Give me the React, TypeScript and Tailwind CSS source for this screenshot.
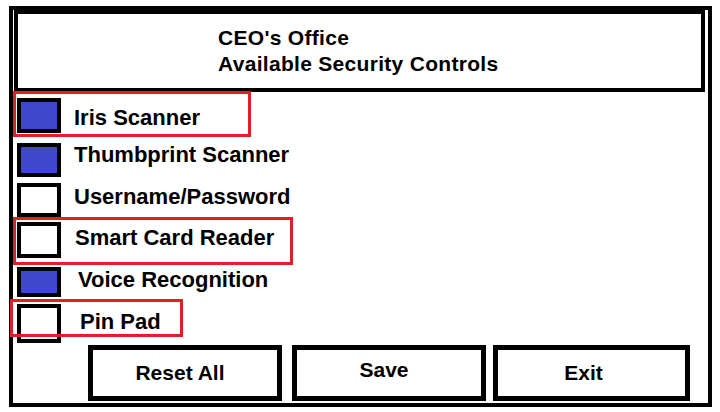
import React from 'react'

type Control = {
  label: string
  checked: boolean
  rowClass: string
  boxClass: string
  labelClass: string
  marked?: string
}

const controls: Control[] = [
  {
    label: 'Iris Scanner',
    checked: true,
    rowClass: 'mt-[6px] h-[35px]',
    boxClass: 'h-[35px]',
    labelClass: 'ml-[13px] mt-[9px]',
    marked: '-top-[7px] left-0 w-[238px] h-[46px]',
  },
  {
    label: 'Thumbprint Scanner',
    checked: true,
    rowClass: 'mt-[10px] h-[34px]',
    boxClass: 'h-[34px]',
    labelClass: 'ml-[13px] mt-[1px]',
  },
  {
    label: 'Username/Password',
    checked: false,
    rowClass: 'mt-[6px] h-[34px]',
    boxClass: 'h-[34px]',
    labelClass: 'ml-[13px] mt-[3px]',
  },
  {
    label: 'Smart Card Reader',
    checked: false,
    rowClass: 'mt-[5px] h-[36px]',
    boxClass: 'h-[36px]',
    labelClass: 'ml-[14px] mt-[5px]',
    marked: '-top-[5px] left-0 w-[280px] h-[48px]',
  },
  {
    label: 'Voice Recognition',
    checked: true,
    rowClass: 'mt-[9px] h-[30px]',
    boxClass: 'h-[30px]',
    labelClass: 'ml-[17px] mt-[2px]',
  },
  {
    label: 'Pin Pad',
    checked: false,
    rowClass: 'mt-[7px] h-[39px]',
    boxClass: 'h-[39px]',
    labelClass: 'ml-[19px] mt-[7px]',
    marked: '-top-[5px] -left-[3px] w-[173px] h-[38px]',
  },
]

export default function App() {
  return (
    <div
      className="h-[412px] w-[720px] bg-white pl-[9px] pt-[6px] text-black"
      style={{ fontFamily: '"Liberation Sans", Arial, sans-serif' }}
    >
      <div className="flex h-[401px] w-[703px] flex-col border-4 border-black">
        {/* header */}
        <div className="ml-[1px] mr-[3px] h-[82px] shrink-0 border-4 border-black pl-[200px] pt-[11px] text-[21px] font-bold leading-[26px] tracking-[0.3px]">
          <div>CEO's Office</div>
          <div>Available Security Controls</div>
        </div>

        {/* control list */}
        {controls.map((c) => (
          <div key={c.label} className={`relative flex shrink-0 items-start ${c.rowClass}`}>
            <div
              className={`ml-[4px] w-[44px] shrink-0 border-4 border-black ${c.boxClass} ${
                c.checked ? 'bg-[#3f48cc]' : 'bg-white'
              }`}
            />
            <span className={`whitespace-nowrap text-[22px] font-bold leading-none ${c.labelClass}`}>
              {c.label}
            </span>
            {c.marked && (
              <div className={`pointer-events-none absolute border-[3px] border-[#e01f27] ${c.marked}`} />
            )}
          </div>
        ))}

        {/* buttons */}
        <div className="ml-[75px] mt-[2px] flex h-[56px] shrink-0 gap-[10px]">
          <button className="flex w-[194px] items-center justify-center border-[5px] border-black bg-white pr-[10px] text-[21px] font-bold">
            Reset All
          </button>
          <button className="flex w-[194px] items-center justify-center border-[5px] border-black bg-white pb-[6px] pr-[10px] text-[21px] font-bold">
            Save
          </button>
          <button className="ml-[-3px] flex w-[197px] items-center justify-center border-[5px] border-black bg-white pr-[16px] text-[21px] font-bold">
            Exit
          </button>
        </div>
      </div>
    </div>
  )
}
